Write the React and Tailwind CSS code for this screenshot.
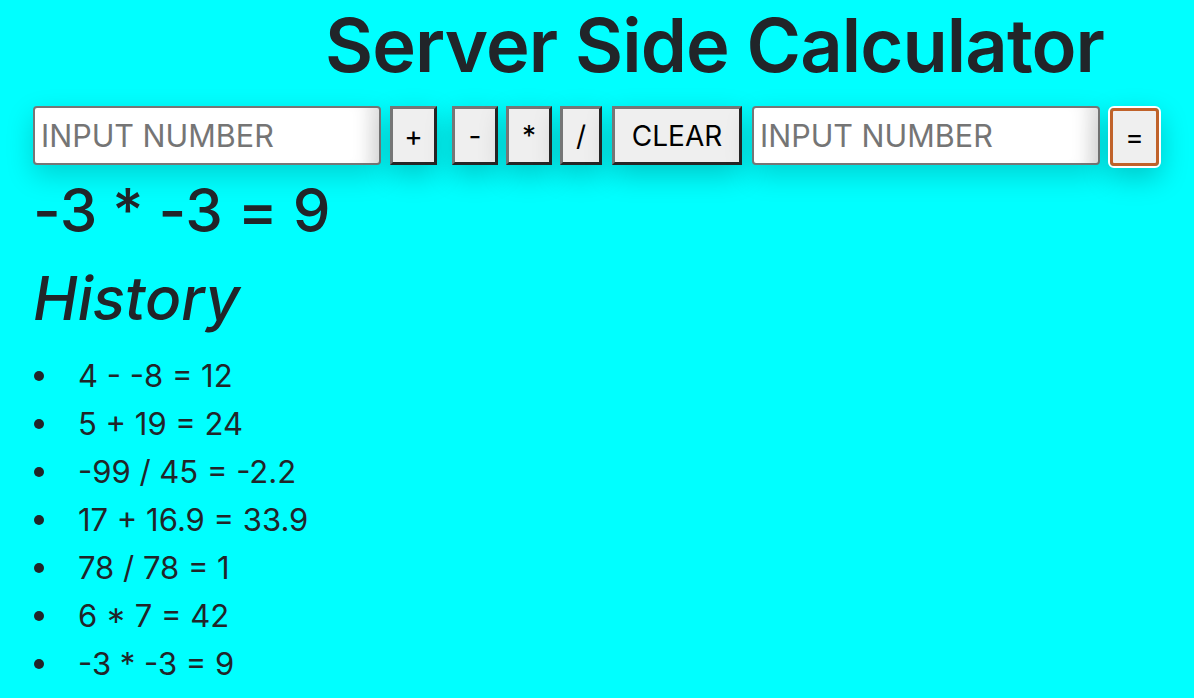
export default function App() {
  const history = [
    "4 - -8 = 12",
    "5 + 19 = 24",
    "-99 / 45 = -2.2",
    "17 + 16.9 = 33.9",
    "78 / 78 = 1",
    "6 * 7 = 42",
    "-3 * -3 = 9",
  ];

  const ops = [
    { label: "+", w: "w-[47px]", ml: "ml-[9px]" },
    { label: "-", w: "w-[46px]", ml: "ml-[15px]" },
    { label: "*", w: "w-[46px]", ml: "ml-[8px]" },
    { label: "/", w: "w-[42px]", ml: "ml-[8px]" },
  ];

  const btn =
    "h-[59px] bg-[#efefef] border-[3px] border-t-[#767676] border-l-[#767676] border-b-[#262626] border-r-[#262626] text-black text-[28px] flex items-center justify-center shadow-[0_10px_28px_rgba(0,0,0,0.22)]";

  const input =
    "w-[348px] h-[59px] rounded-[4px] border-2 border-[#767676] bg-white px-[6px] text-[30.5px] text-black placeholder:text-[#757575] outline-none shadow-[0_10px_28px_rgba(0,0,0,0.18),inset_-24px_0_18px_-14px_rgba(0,0,0,0.12)]";

  return (
    <div
      className="min-h-[698px] w-full bg-[#00ffff] text-[#212529] overflow-hidden"
      style={{ fontFamily: "Inter, 'Liberation Sans', sans-serif" }}
    >
      <div className="pl-[33px]">
        <h1 className="pl-[292px] text-[74px] font-semibold leading-[90px] tracking-[-0.9px]">
          Server Side Calculator
        </h1>

        <div className="mt-[16px] flex items-start">
          <input className={input} placeholder="INPUT NUMBER" />
          {ops.map((o) => (
            <button key={o.label} className={`${btn} ${o.w} ${o.ml}`}>
              {o.label}
            </button>
          ))}
          <button className={`${btn} w-[130px] ml-[10px]`}>CLEAR</button>
          <input className={`${input} ml-[10px]`} placeholder="INPUT NUMBER" />
          <div className="ml-[8px] rounded-[6px] border-2 border-white shadow-[0_10px_28px_rgba(0,0,0,0.22)]">
            <button className="w-[49px] h-[58px] rounded-[4px] border-[3px] border-[#c0622a] bg-[#efefef] text-black text-[28px] flex items-center justify-center">
              =
            </button>
          </div>
        </div>

        <h2 className="mt-[6px] text-[60px] font-medium leading-[72px] tracking-[-0.5px]">-3 * -3 = 9</h2>
        <h2 className="mt-[16px] text-[60px] font-medium italic leading-[72px]">History</h2>

        <ul className="mt-[18px] text-[31px] leading-[48px]">
          {history.map((h, i) => (
            <li key={i} className="flex items-center">
              <span className="ml-[1px] w-[10px] h-[10px] rounded-full bg-[#212529]" />
              <span className="ml-[34px]">{h}</span>
            </li>
          ))}
        </ul>
      </div>
    </div>
  );
}
